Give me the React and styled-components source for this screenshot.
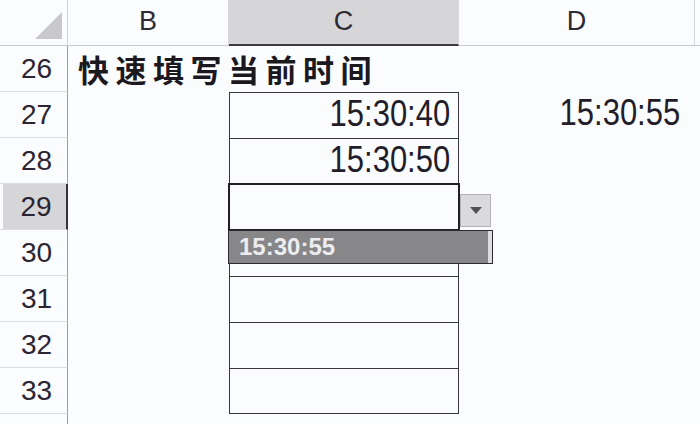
import React from 'react';
import styled, { createGlobalStyle } from 'styled-components';

const GlobalStyle = createGlobalStyle`
    html, body {
        margin: 0;
        padding: 0;
        background: #fbfcfe;
        overflow: hidden;
    }
`;

const Sheet = styled.div`
    display: grid;
    grid-template-columns: 68px 161px 230px 236px 1fr;
    grid-auto-rows: 46px;
    height: 424px;
    overflow: hidden;
    background: #fbfcfe;
    font-family: "Liberation Sans", Arial, sans-serif;
    color: #221d29;
`;

const Corner = styled.div`
    position: relative;
    border-right: 1px solid #d2d2d8;
    border-bottom: 1px solid #c8c8ce;
    box-sizing: border-box;
`;

const CornerMark = styled.svg`
    position: absolute;
    left: 35px;
    top: 12px;
`;

const ColHeader = styled.div`
    display: flex;
    align-items: center;
    justify-content: center;
    box-sizing: border-box;
    font-size: 27px;
    color: #2e2a33;
    padding-bottom: 2px;
    background: ${p => (p.$active ? '#d6d6d8' : 'transparent')};
    border-right: 1px solid #d6d6dc;
    border-bottom: ${p => (p.$active ? '2px solid #3c3c40' : '1px solid #c8c8ce')};
`;

const RowHeader = styled.div`
    display: flex;
    align-items: center;
    justify-content: center;
    box-sizing: border-box;
    padding-left: 6px;
    font-size: 28px;
    color: #2b2433;
    background: ${p => (p.$active ? '#d6d6d8' : 'transparent')};
    border-bottom: 1px solid #dcdce0;
    border-right: ${p => (p.$active ? '2px solid #333' : '1px solid #9b9bab')};
    box-shadow: ${p => (p.$active ? 'inset 3px 0 0 #fbfcfe' : 'none')};
`;

const Cell = styled.div`
    position: relative;
    display: flex;
    align-items: center;
    justify-content: ${p => (p.$align === 'right' ? 'flex-end' : 'flex-start')};
    box-sizing: border-box;
    padding: 0 ${p => p.$pad || 8}px 0 10px;
    white-space: nowrap;
    border-top: ${p => (p.$boxed ? '1px solid #3a3640' : 'none')};
    border-left: ${p => (p.$boxed ? '1px solid #3a3640' : 'none')};
    border-right: ${p => (p.$boxed ? '1px solid #3a3640' : 'none')};
    border-bottom: ${p => (p.$last ? '1px solid #3a3640' : 'none')};
    z-index: ${p => (p.$active ? 2 : 1)};
`;

const Time = styled.span`
    display: inline-block;
    font-size: 36px;
    transform: scaleX(0.86);
    transform-origin: right center;
    margin-top: -4px;
`;

const Title = styled.span`
    font-family: "Noto Sans CJK SC", "Noto Sans", sans-serif;
    font-weight: 700;
    font-size: 31px;
    letter-spacing: 6.5px;
    color: #1c1820;
    margin-top: -2px;
`;

const ActiveFrame = styled.div`
    position: absolute;
    top: -2px;
    left: -2px;
    right: -2px;
    bottom: -1px;
    border: 2px solid #221f26;
    pointer-events: none;
`;

const DropButton = styled.div`
    position: absolute;
    top: 9px;
    left: calc(100% + 2px);
    width: 31px;
    height: 33px;
    box-sizing: border-box;
    background: #dadadc;
    border: 1px solid #b4b4b8;
    display: flex;
    align-items: center;
    justify-content: center;
`;

const DropList = styled.div`
    position: absolute;
    top: 45px;
    left: -2px;
    width: 265px;
    height: 34px;
    box-sizing: border-box;
    background: #878789;
    border: 1px solid #2e2c33;
    box-shadow: inset -4px 0 0 #dedee0;
    display: flex;
    align-items: center;
    padding-left: 10px;
    font-size: 24px;
    font-weight: 700;
    color: #ededef;
`;

const columns = ['B', 'C', 'D'];

const rows = [
    { n: 26, title: '快速填写当前时间' },
    { n: 27, c: '15:30:40', d: '15:30:55', boxed: true },
    { n: 28, c: '15:30:50', boxed: true },
    { n: 29, boxed: true, active: true },
    { n: 30, boxed: true },
    { n: 31, boxed: true },
    { n: 32, boxed: true },
    { n: 33, boxed: true, last: true },
    { n: 34, hidden: true },
];

const App = () => {
    return (
        <>
            <GlobalStyle />
            <Sheet>
                <Corner>
                    <CornerMark width="28" height="27" viewBox="0 0 28 27">
                        <polygon points="0,27 27,27 27,0" fill="#c9c9cd" />
                    </CornerMark>
                </Corner>
                {columns.map(col => (
                    <ColHeader key={col} $active={col === 'C'}>{col}</ColHeader>
                ))}
                <ColHeader />

                {rows.map(row => (
                    <React.Fragment key={row.n}>
                        <RowHeader $active={row.active}>{row.hidden ? '' : row.n}</RowHeader>
                        <Cell>
                            {row.title && <Title>{row.title}</Title>}
                        </Cell>
                        <Cell $align="right" $boxed={row.boxed} $last={row.last} $active={row.active}>
                            {row.c && <Time>{row.c}</Time>}
                            {row.active && (
                                <>
                                    <ActiveFrame />
                                    <DropButton>
                                        <svg width="12" height="7" viewBox="0 0 12 7">
                                            <polygon points="0,0 12,0 6,7" fill="#505055" />
                                        </svg>
                                    </DropButton>
                                    <DropList>15:30:55</DropList>
                                </>
                            )}
                        </Cell>
                        <Cell $align="right" $pad={15}>
                            {row.d && <Time>{row.d}</Time>}
                        </Cell>
                        <Cell />
                    </React.Fragment>
                ))}
            </Sheet>
        </>
    );
};

export default App;
